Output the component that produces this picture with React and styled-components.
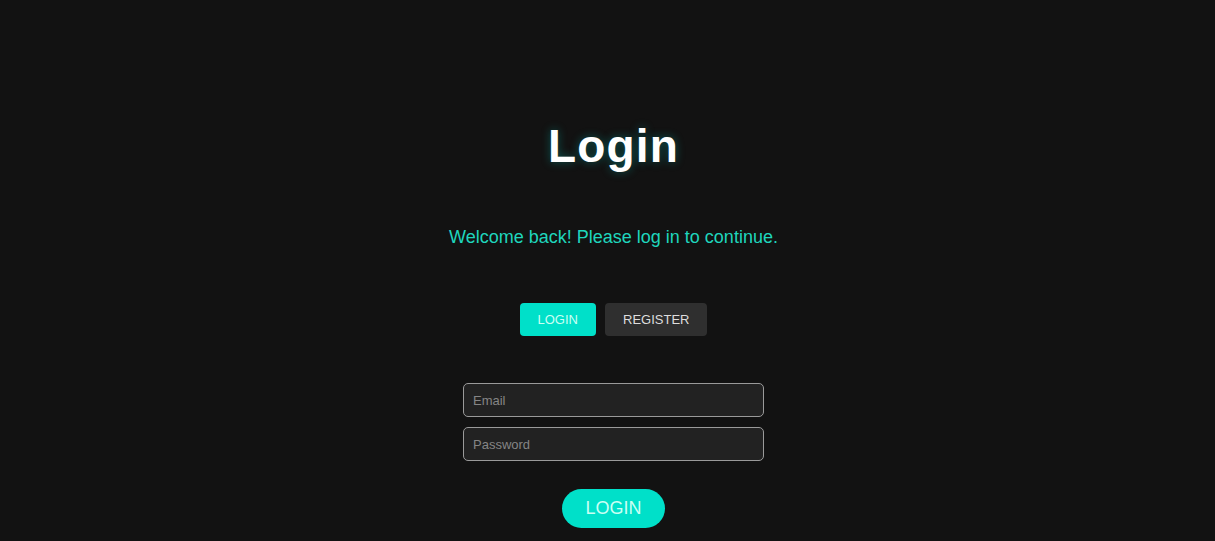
import React, { useState } from "react";
import styled, { createGlobalStyle } from "styled-components";

const GlobalStyle = createGlobalStyle`
  html, body {
    margin: 0;
    padding: 0;
    background-color: #121212;
  }
  body {
    font-family: "Liberation Sans", Arial, sans-serif;
    color: #ffffff;
  }
`;

const Page = styled.div`
  min-height: 541px;
  display: flex;
  flex-direction: column;
  align-items: center;
  padding: 118px 0 0 12px;
  box-sizing: border-box;
`;

const Title = styled.h1`
  margin: 0;
  font-size: 46px;
  line-height: 56px;
  font-weight: 700;
  letter-spacing: 1.2px;
  color: #ffffff;
  text-shadow: 0 0 10px rgba(0, 170, 160, 0.45);
`;

const Subtitle = styled.p`
  margin: 52px 0 0;
  font-size: 18px;
  line-height: 22px;
  color: #1fd6bd;
`;

const Tabs = styled.div`
  display: flex;
  gap: 9px;
  margin-top: 55px;
`;

const Tab = styled.button`
  height: 33px;
  padding: 0 18px;
  border: none;
  border-radius: 4px;
  font-family: "Liberation Sans", Arial, sans-serif;
  font-size: 13px;
  cursor: pointer;
  background-color: ${(p) => (p.$active ? "#00e0c9" : "#2f2f2f")};
  color: ${(p) => (p.$active ? "#c9fff4" : "#dddddd")};
`;

const Form = styled.form`
  display: flex;
  flex-direction: column;
  align-items: center;
  margin-top: 47px;
`;

const Field = styled.input`
  width: 301px;
  height: 34px;
  box-sizing: border-box;
  padding: 0 9px;
  margin-bottom: 10px;
  border: 1px solid #9a9a9a;
  border-radius: 5px;
  background-color: #222222;
  color: #eeeeee;
  font-family: "Liberation Sans", Arial, sans-serif;
  font-size: 13px;
  outline: none;

  &::placeholder {
    color: #858585;
  }
`;

const Submit = styled.button`
  margin-top: 18px;
  height: 39px;
  padding: 0 23px;
  border: none;
  border-radius: 20px;
  background-color: #00e0c9;
  color: #c9fff4;
  font-family: "Liberation Sans", Arial, sans-serif;
  font-size: 18px;
  cursor: pointer;
`;

export default function App() {
  const [tab, setTab] = useState("login");

  return (
    <>
      <GlobalStyle />
      <Page>
        <Title>Login</Title>
        <Subtitle>Welcome back! Please log in to continue.</Subtitle>
        <Tabs>
          <Tab $active={tab === "login"} onClick={() => setTab("login")}>
            LOGIN
          </Tab>
          <Tab $active={tab === "register"} onClick={() => setTab("register")}>
            REGISTER
          </Tab>
        </Tabs>
        <Form onSubmit={(e) => e.preventDefault()}>
          <Field type="email" placeholder="Email" />
          <Field type="password" placeholder="Password" />
          <Submit type="submit">LOGIN</Submit>
        </Form>
      </Page>
    </>
  );
}
